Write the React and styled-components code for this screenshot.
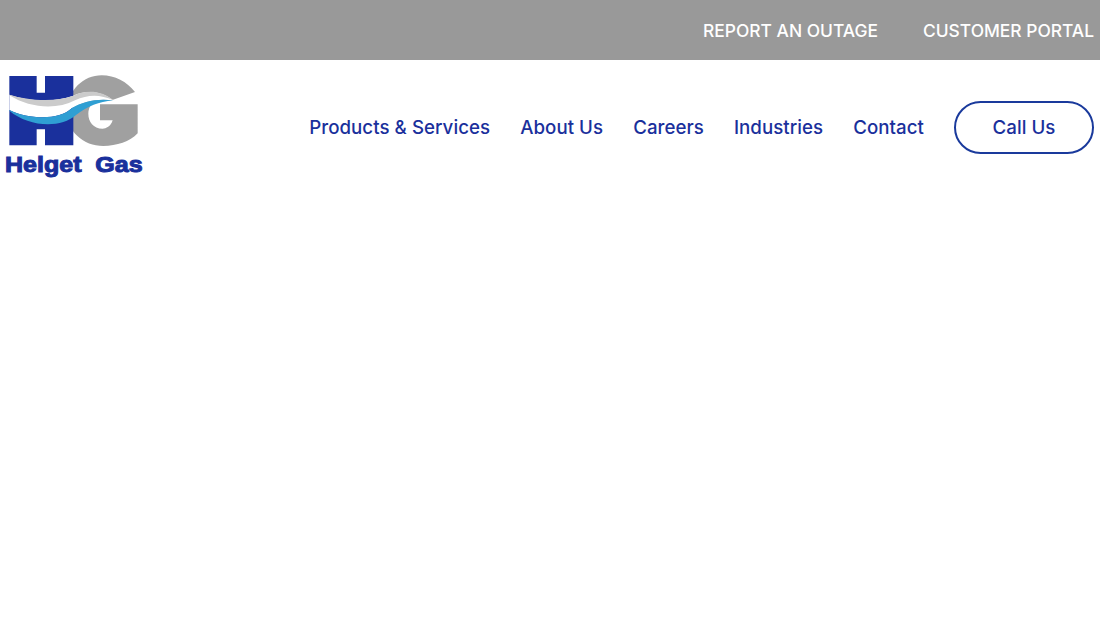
import React from 'react'
import styled, { createGlobalStyle } from 'styled-components'

const navLinks = ['Products & Services', 'About Us', 'Careers', 'Industries', 'Contact']

const Logo = () => (
    <LogoSvg viewBox="0 0 450 360" role="img" aria-label="Helget Gas">
        {/* grey G */}
        <path
            fill="#a0a0a0"
            d="M405 81 C380 50 345 31 305 31 C250 31 205 75 200 135 C200 200 250 243 310 243 C350 243 390 230 413 205 L413 118 L300 118 L300 166 L338 166 C332 185 318 191 308 191 C280 191 265 170 265 146 C265 130 272 118 282 110 L335 106 Z"
        />
        {/* blue H */}
        <path
            fill="#1a309c"
            d="M28 33 H110 V83 H135 V33 H220 V241 H135 V193 H110 V241 H28 Z"
        />
        {/* waves */}
        <path
            fill="#ffffff"
            d="M28 89 C80 108 160 114 220 92 C255 76 300 76 340 106 C290 100 250 110 215 130 C180 165 90 165 28 135 Z"
        />
        <path
            fill="#cbcbcb"
            d="M28 89 C80 105 160 114 220 92 C255 74 305 74 340 106 C300 88 265 88 225 106 C170 135 90 130 28 91 Z"
        />
        <path
            fill="#2f9fd3"
            d="M28 135 C90 165 180 165 215 130 C250 108 290 100 340 106 C295 112 265 122 228 150 C180 192 85 185 28 137 Z"
        />
        <LogoText x="15" y="320" textLength="413" lengthAdjust="spacingAndGlyphs">
            Helget&#160;&#160;Gas
        </LogoText>
    </LogoSvg>
)

const App = () => (
    <>
        <GlobalStyle />
        <TopBar>
            <TopLink>REPORT AN OUTAGE</TopLink>
            <TopLink>CUSTOMER PORTAL</TopLink>
        </TopBar>
        <Header>
            <Logo />
            <Nav>
                {navLinks.map((link) => (
                    <NavLink key={link}>{link}</NavLink>
                ))}
                <CallButton>Call Us</CallButton>
            </Nav>
        </Header>
    </>
)

export default App

const GlobalStyle = createGlobalStyle`
    html, body {
        margin: 0;
        background: #fff;
        font-family: Inter, "Open Sans", sans-serif;
    }
    #root {
        min-height: 625px;
    }
`

const TopBar = styled.div`
    display: flex;
    justify-content: flex-end;
    align-items: center;
    gap: 45px;
    height: 60px;
    padding-right: 6px;
    background: #999999;
`

const TopLink = styled.a`
    color: #fff;
    font-size: 17.4px;
    font-weight: 500;
    white-space: nowrap;
`

const Header = styled.header`
    display: flex;
    justify-content: space-between;
    align-items: center;
    height: 135px;
    padding-right: 6px;
`

const LogoSvg = styled.svg`
    display: block;
    width: 150px;
    height: 120px;
    margin-bottom: 5px;
`

const LogoText = styled.text`
    fill: #1a309c;
    font-family: "Liberation Sans", Arial, sans-serif;
    font-weight: 700;
    font-size: 66px;
    stroke: #1a309c;
    stroke-width: 3px;
`

const Nav = styled.nav`
    display: flex;
    align-items: center;
    gap: 30px;
`

const NavLink = styled.a`
    color: #1a309c;
    font-size: 18.7px;
    font-weight: 500;
    letter-spacing: 0.05px;
    white-space: nowrap;
`

const CallButton = styled.button`
    box-sizing: border-box;
    width: 140px;
    height: 53px;
    border: 2px solid #1a3a9c;
    border-radius: 27px;
    background: #fff;
    color: #1a309c;
    font-family: inherit;
    font-size: 18.7px;
    font-weight: 500;
    letter-spacing: 0.05px;
`
